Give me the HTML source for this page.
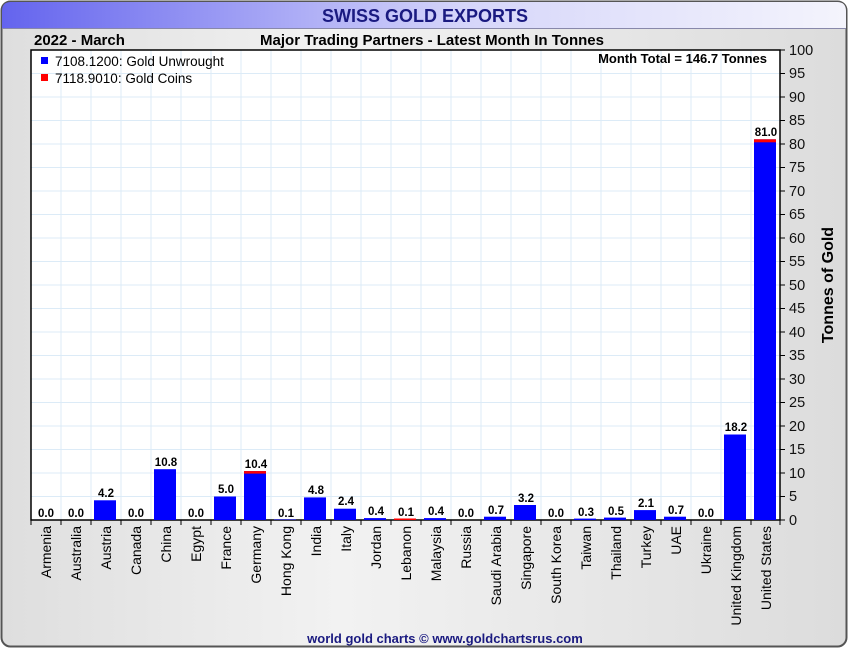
<!DOCTYPE html>
<html><head><meta charset="utf-8"><style>
html,body{margin:0;padding:0;width:850px;height:650px;overflow:hidden;background:#fff}
svg{display:block}
text{font-family:"Liberation Sans",sans-serif}
</style></head><body>
<svg width="850" height="650" xmlns="http://www.w3.org/2000/svg">
<defs>
<linearGradient id="hd" x1="0" x2="1" y1="0" y2="0"><stop offset="0" stop-color="#6464ee"/><stop offset="0.55" stop-color="#d6d6fa"/><stop offset="1" stop-color="#f4f4fc"/></linearGradient>
<linearGradient id="bg" x1="0" x2="1" y1="0" y2="0"><stop offset="0" stop-color="#dedede"/><stop offset="0.4" stop-color="#f2f2f2"/><stop offset="1" stop-color="#dcdcdc"/></linearGradient>
</defs>
<rect x="1.5" y="1.5" width="845" height="645" rx="9" fill="url(#bg)" stroke="#555" stroke-width="2"/>
<path d="M2,28 L2,11 Q2,2 11,2 L837,2 Q846,2 846,11 L846,28 Z" fill="url(#hd)"/>
<line x1="2" y1="28.5" x2="846" y2="28.5" stroke="#8888aa"/>
<text x="425" y="22" text-anchor="middle" font-size="18" font-weight="bold" fill="#1a1a80">SWISS GOLD EXPORTS</text>
<text x="34" y="45" font-size="15" font-weight="bold">2022 - March</text>
<text x="432" y="45" text-anchor="middle" font-size="15" font-weight="bold">Major Trading Partners - Latest Month In Tonnes</text>
<rect x="31" y="50" width="749" height="470" fill="#fff"/>
<g stroke="#dcebf7" stroke-width="1">
<path d="M61,50V520M91,50V520M121,50V520M151,50V520M181,50V520M211,50V520M241,50V520M271,50V520M301,50V520M331,50V520M361,50V520M391,50V520M421,50V520M451,50V520M481,50V520M511,50V520M541,50V520M571,50V520M601,50V520M631,50V520M661,50V520M691,50V520M721,50V520M751,50V520"/>
<path d="M31,73.5H780M31,97H780M31,120.5H780M31,144H780M31,167.5H780M31,191H780M31,214.5H780M31,238H780M31,261.5H780M31,285H780M31,308.5H780M31,332H780M31,355.5H780M31,379H780M31,402.5H780M31,426H780M31,449.5H780M31,473H780M31,496.5H780"/>
</g>
<rect x="31" y="50" width="749" height="470" fill="none" stroke="#000" stroke-width="1.5"/>
<rect x="41" y="57" width="7" height="7" fill="#00f"/><text x="55" y="66" font-size="13.5">7108.1200: Gold Unwrought</text>
<rect x="41" y="74" width="7" height="7" fill="#f00"/><text x="55" y="83" font-size="13.5">7118.9010: Gold Coins</text>
<text x="767" y="63" text-anchor="end" font-size="13" font-weight="bold">Month Total = 146.7 Tonnes</text>
<g fill="#00f">
<rect x="94" y="500.3" width="22" height="19.7"/>
<rect x="154" y="469.2" width="22" height="50.8"/>
<rect x="214" y="496.5" width="22" height="23.5"/>
<rect x="244" y="471.1" width="22" height="48.9"/>
<rect x="274" y="519.5" width="22" height="0.5"/>
<rect x="304" y="497.4" width="22" height="22.6"/>
<rect x="334" y="508.7" width="22" height="11.3"/>
<rect x="364" y="518.1" width="22" height="1.9"/>
<rect x="424" y="518.1" width="22" height="1.9"/>
<rect x="484" y="516.7" width="22" height="3.3"/>
<rect x="514" y="505" width="22" height="15"/>
<rect x="574" y="518.6" width="22" height="1.4"/>
<rect x="604" y="517.6" width="22" height="2.4"/>
<rect x="634" y="510.1" width="22" height="9.9"/>
<rect x="664" y="516.7" width="22" height="3.3"/>
<rect x="724" y="434.5" width="22" height="85.5"/>
<rect x="754" y="139.3" width="22" height="380.7"/>
</g>
<g fill="#f00">
<rect x="244" y="471.1" width="22" height="2.5"/>
<rect x="754" y="139.3" width="22" height="3"/>
<rect x="394" y="518.5" width="22" height="1.5"/>
</g>
<g font-size="11.5" font-weight="bold" text-anchor="middle">
<text x="46" y="517">0.0</text><text x="76" y="517">0.0</text><text x="106" y="497">4.2</text><text x="136" y="517">0.0</text><text x="166" y="466">10.8</text><text x="196" y="517">0.0</text><text x="226" y="493">5.0</text><text x="256" y="468">10.4</text><text x="286" y="517">0.1</text><text x="316" y="494">4.8</text><text x="346" y="505">2.4</text><text x="376" y="515">0.4</text><text x="406" y="516">0.1</text><text x="436" y="515">0.4</text><text x="466" y="517">0.0</text><text x="496" y="514">0.7</text><text x="526" y="502">3.2</text><text x="556" y="517">0.0</text><text x="586" y="516">0.3</text><text x="616" y="515">0.5</text><text x="646" y="507">2.1</text><text x="676" y="514">0.7</text><text x="706" y="517">0.0</text><text x="736" y="431">18.2</text><text x="766" y="136">81.0</text>
</g>
<path d="M31,520v5M61,520v5M91,520v5M121,520v5M151,520v5M181,520v5M211,520v5M241,520v5M271,520v5M301,520v5M331,520v5M361,520v5M391,520v5M421,520v5M451,520v5M481,520v5M511,520v5M541,520v5M571,520v5M601,520v5M631,520v5M661,520v5M691,520v5M721,520v5M751,520v5M780,520v5" stroke="#000"/>
<path d="M780,50h5M780,73.5h5M780,97h5M780,120.5h5M780,144h5M780,167.5h5M780,191h5M780,214.5h5M780,238h5M780,261.5h5M780,285h5M780,308.5h5M780,332h5M780,355.5h5M780,379h5M780,402.5h5M780,426h5M780,449.5h5M780,473h5M780,496.5h5M780,520h5" stroke="#000"/>
<g font-size="14.5" fill="#111">
<text x="789" y="55">100</text><text x="789" y="78">95</text><text x="789" y="102">90</text><text x="789" y="125">85</text><text x="789" y="149">80</text><text x="789" y="172">75</text><text x="789" y="196">70</text><text x="789" y="219">65</text><text x="789" y="243">60</text><text x="789" y="266">55</text><text x="789" y="290">50</text><text x="789" y="313">45</text><text x="789" y="337">40</text><text x="789" y="360">35</text><text x="789" y="384">30</text><text x="789" y="407">25</text><text x="789" y="431">20</text><text x="789" y="454">15</text><text x="789" y="478">10</text><text x="789" y="501">5</text><text x="789" y="525">0</text>
</g>
<text transform="translate(833,285) rotate(-90)" text-anchor="middle" font-size="16" font-weight="bold">Tonnes of Gold</text>
<g font-size="14" text-anchor="end">
<text transform="translate(51,526) rotate(-90)">Armenia</text>
<text transform="translate(81,526) rotate(-90)">Australia</text>
<text transform="translate(111,526) rotate(-90)">Austria</text>
<text transform="translate(141,526) rotate(-90)">Canada</text>
<text transform="translate(171,526) rotate(-90)">China</text>
<text transform="translate(201,526) rotate(-90)">Egypt</text>
<text transform="translate(231,526) rotate(-90)">France</text>
<text transform="translate(261,526) rotate(-90)">Germany</text>
<text transform="translate(291,526) rotate(-90)">Hong Kong</text>
<text transform="translate(321,526) rotate(-90)">India</text>
<text transform="translate(351,526) rotate(-90)">Italy</text>
<text transform="translate(381,526) rotate(-90)">Jordan</text>
<text transform="translate(411,526) rotate(-90)">Lebanon</text>
<text transform="translate(441,526) rotate(-90)">Malaysia</text>
<text transform="translate(471,526) rotate(-90)">Russia</text>
<text transform="translate(501,526) rotate(-90)">Saudi Arabia</text>
<text transform="translate(531,526) rotate(-90)">Singapore</text>
<text transform="translate(561,526) rotate(-90)">South Korea</text>
<text transform="translate(591,526) rotate(-90)">Taiwan</text>
<text transform="translate(621,526) rotate(-90)">Thailand</text>
<text transform="translate(651,526) rotate(-90)">Turkey</text>
<text transform="translate(681,526) rotate(-90)">UAE</text>
<text transform="translate(711,526) rotate(-90)">Ukraine</text>
<text transform="translate(741,526) rotate(-90)">United Kingdom</text>
<text transform="translate(771,526) rotate(-90)">United States</text>
</g>
<text x="445" y="643" text-anchor="middle" font-size="13" font-weight="bold" fill="#1a1a80">world gold charts © www.goldchartsrus.com</text>
</svg>
</body></html>
